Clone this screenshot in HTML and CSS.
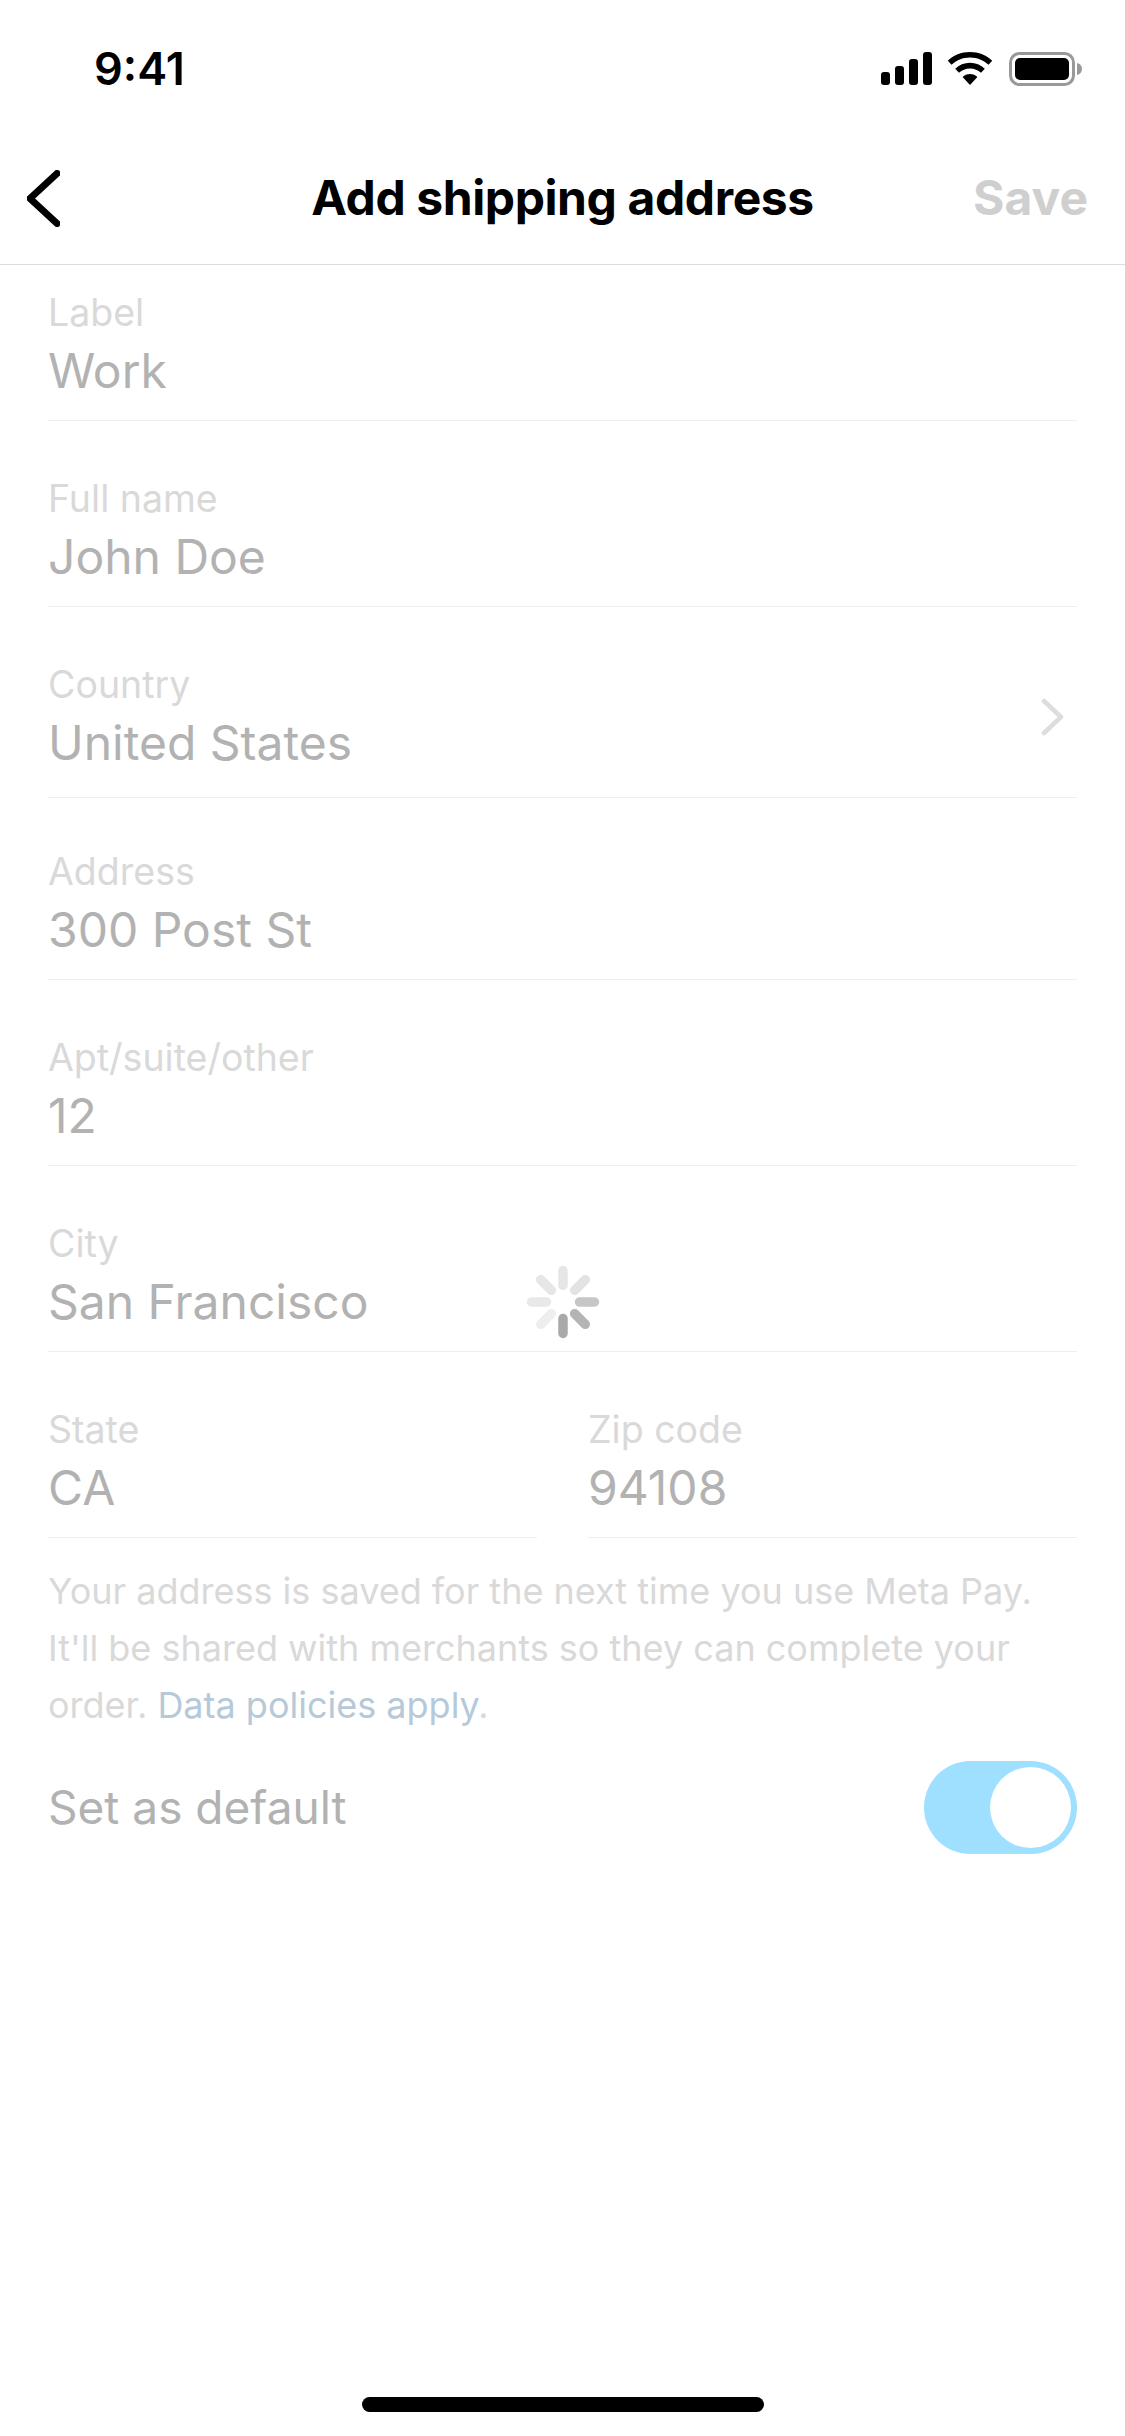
FILE: index.html
```html
<!DOCTYPE html>
<html lang="en">
<head>
<meta charset="utf-8">
<title>Add shipping address</title>
<link rel="stylesheet" href="styles.css">
</head>
<body>
<div class="page">
  <header class="status">
    <span class="time">9:41</span>
    <div class="status-icons">
      <svg class="i-signal" width="51" height="33" viewBox="0 0 51 33"><rect x="0" y="20" width="9" height="13" rx="3"/><rect x="14" y="14" width="9" height="19" rx="3"/><rect x="28" y="7" width="9" height="26" rx="3"/><rect x="42" y="0" width="9" height="33" rx="3"/></svg>
      <svg class="i-wifi" width="46" height="33" viewBox="0 0 46 33"><path d="M23 0C14.300 0 6.500 3.300.8 8.800L4.500 12.800C9.300 8.300 15.800 5.500 23 5.500s13.700 2.800 18.500 7.300l3.700-4C39.500 3.300 31.700 0 23 0z"/><path d="M23 10.800c-5.700 0-10.900 2.200-14.800 5.900l3.800 4C14.900 18 18.700 16.400 23 16.400s8.100 1.600 11 4.300l3.800-4c-3.900-3.700-9.100-5.900-14.800-5.900z"/><path d="M23 22c-2.900 0-5.500 1.100-7.400 3L23 33l7.400-8c-1.900-1.900-4.500-3-7.400-3z"/></svg>
      <svg class="i-battery" width="73" height="34" viewBox="0 0 73 34"><rect x="1.500" y="1.500" width="63" height="31" rx="9" fill="none" stroke="#999" stroke-width="3"/><rect x="6" y="6" width="54" height="22" rx="5"/><path d="M68 11c3 .6 5 3 5 6s-2 5.400-5 6z" fill="#999"/></svg>
    </div>
  </header>

  <nav class="nav">
    <svg class="back" width="33" height="57" viewBox="0 0 33 57"><path d="M30 3.500 3 28.500l27 25" fill="none" stroke="#000" stroke-width="7" stroke-linecap="round" stroke-linejoin="round"/></svg>
    <h1 class="title">Add shipping address</h1>
    <span class="save">Save</span>
  </nav>

  <main class="form">
    <div class="field field--first">
      <div class="label">Label</div>
      <div class="value">Work</div>
    </div>
    <div class="field">
      <div class="label">Full name</div>
      <div class="value">John Doe</div>
    </div>
    <div class="field field--select">
      <div>
        <div class="label">Country</div>
        <div class="value">United States</div>
      </div>
      <svg class="chevron" width="23" height="38" viewBox="0 0 23 38"><path d="M3 3l17 16L3 35" fill="none" stroke="#ddd" stroke-width="4.500" stroke-linecap="round" stroke-linejoin="round"/></svg>
    </div>
    <div class="field field--after-select">
      <div class="label">Address</div>
      <div class="value">300 Post St</div>
    </div>
    <div class="field">
      <div class="label">Apt/suite/other</div>
      <div class="value">12</div>
    </div>
    <div class="field field--city">
      <div class="label">City</div>
      <div class="value">San Francisco</div>
      <svg class="spinner" width="74" height="74" viewBox="-37 -37 74 74" stroke-width="9.500" stroke-linecap="round">
        <path d="M0-31.500V-16.500" stroke="#e6e6e6"/>
        <path d="M0-31.500V-16.500" stroke="#e3e3e3" transform="rotate(45)"/>
        <path d="M0-31.500V-16.500" stroke="#c6c6c6" transform="rotate(90)"/>
        <path d="M0-31.500V-16.500" stroke="#b4b4b4" transform="rotate(135)"/>
        <path d="M0-31.500V-16.500" stroke="#a9a9a9" transform="rotate(180)"/>
        <path d="M0-31.500V-16.500" stroke="#eeeeee" transform="rotate(225)"/>
        <path d="M0-31.500V-16.500" stroke="#e9e9e9" transform="rotate(270)"/>
        <path d="M0-31.500V-16.500" stroke="#e6e6e6" transform="rotate(315)"/>
      </svg>
    </div>
    <div class="split">
      <div class="field">
        <div class="label">State</div>
        <div class="value">CA</div>
      </div>
      <div class="field">
        <div class="label">Zip code</div>
        <div class="value">94108</div>
      </div>
    </div>
    <p class="note">Your address is saved for the next time you use Meta Pay. It'll be shared with merchants so they can complete your order. <span class="link">Data policies apply</span>.</p>
    <div class="default-row">
      <span class="default-label">Set as default</span>
      <div class="toggle"><div class="knob"></div></div>
    </div>
  </main>

  <footer class="home"><div class="home-bar"></div></footer>
</div>
</body>
</html>
```

FILE: styles.css
```css
* { box-sizing: border-box; }
html, body { margin: 0; padding: 0; background: #fff; }
body { font-family: Inter, "Liberation Sans", sans-serif; }
.page { width: 1125px; height: 2436px; display: flex; flex-direction: column; overflow: hidden; }

.status { height: 132px; flex: none; display: flex; justify-content: space-between; align-items: flex-start; padding: 46px 43px 0 94px; }
.time { font-size: 45px; font-weight: 600; line-height: 46px; color: #000; }
.status-icons { display: flex; align-items: flex-start; gap: 16px; padding-top: 6px; }
.i-wifi { margin-left: -1px; }

.nav { height: 133px; flex: none; display: flex; align-items: center; justify-content: space-between; position: relative; padding: 0 37px 0 27px; border-bottom: 1px solid #dcdcdc; }
.back { display: block; }
.title { margin: 0; font-size: 48px; font-weight: 700; letter-spacing: -0.4px; color: #000; line-height: 60px; position: absolute; left: 0; right: 0; text-align: center; }
.save { font-size: 48px; font-weight: 700; color: #cfcfcf; line-height: 60px; }

.form { padding: 0 48px; flex: none; display: flex; flex-direction: column; }
.field { padding-top: 56px; height: 186px; border-bottom: 1px solid #efefef; }
.field--first { height: 156px; padding-top: 26px; }
.field--select { display: flex; justify-content: space-between; align-items: flex-start; height: 191px; }
.field--after-select { height: 182px; padding-top: 52px; }
.field--city { position: relative; }
.label { font-size: 37.500px; line-height: 44px; color: #d9d9d9; }
.value { margin-top: 5px; font-size: 48px; line-height: 62px; color: #b2b2b2; }
.chevron { flex: none; margin: 35px 13px 0 0; }
.spinner { position: absolute; left: 478px; top: 99px; }

.split { display: grid; grid-template-columns: 489px 489px; gap: 51px; }

.note { margin: 25px 0 0; font-size: 36px; line-height: 57px; color: #d9d9d9; }
.link { color: #b6c9d9; }

.default-row { display: flex; justify-content: space-between; align-items: center; margin-top: 27px; }
.default-label { font-size: 46px; line-height: 56px; padding-bottom: 2px; color: #b2b2b2; }
.toggle { width: 153px; height: 93px; border-radius: 47px; background: #9fdfff; padding: 6px; display: flex; justify-content: flex-end; }
.knob { width: 81px; height: 81px; border-radius: 50%; background: #fff; }

.home { margin-top: auto; flex: none; height: 39px; display: flex; justify-content: center; }
.home-bar { width: 402px; height: 15px; border-radius: 8px; background: #000; }
```
